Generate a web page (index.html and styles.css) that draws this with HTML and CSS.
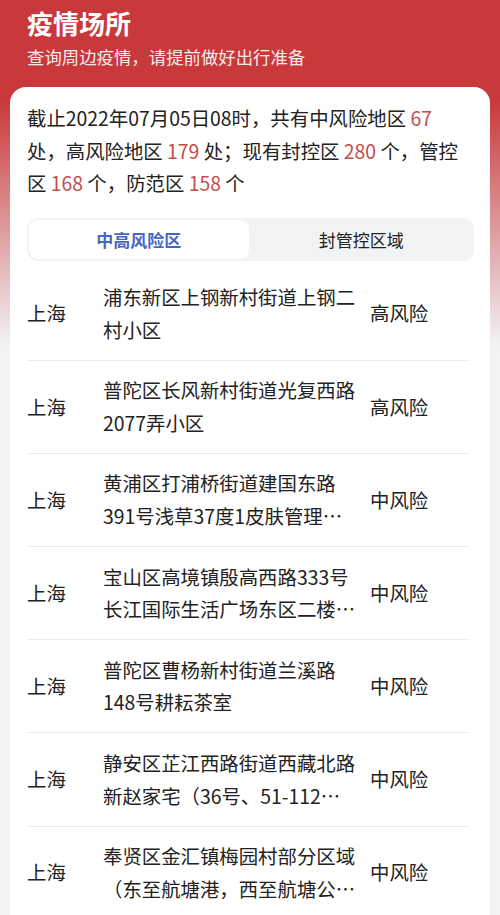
FILE: index.html
```html
<!DOCTYPE html>
<html lang="zh-CN">
<head>
<meta charset="utf-8">
<title>疫情场所</title>
<link rel="stylesheet" href="styles.css">
</head>
<body>
<div class="page">
  <header class="header">
    <h1 class="title">疫情场所</h1>
    <p class="subtitle">查询周边疫情，请提前做好出行准备</p>
  </header>
  <section class="card">
    <p class="summary">截止2022年07月05日08时，共有中风险地区 <span class="num">67</span> 处，高风险地区 <span class="num">179</span> 处；现有封控区 <span class="num">280</span> 个，管控区 <span class="num">168</span> 个，防范区 <span class="num">158</span> 个</p>
    <div class="tabs">
      <div class="tab active">中高风险区</div>
      <div class="tab">封管控区域</div>
    </div>
    <ul class="list">
      <li class="row"><span class="city">上海</span><span class="addr">浦东新区上钢新村街道上钢二村小区</span><span class="risk">高风险</span></li>
      <li class="row"><span class="city">上海</span><span class="addr">普陀区长风新村街道光复西路2077弄小区</span><span class="risk">高风险</span></li>
      <li class="row"><span class="city">上海</span><span class="addr">黄浦区打浦桥街道建国东路391号浅草37度1皮肤管理…</span><span class="risk">中风险</span></li>
      <li class="row"><span class="city">上海</span><span class="addr">宝山区高境镇殷高西路333号长江国际生活广场东区二楼…</span><span class="risk">中风险</span></li>
      <li class="row"><span class="city">上海</span><span class="addr">普陀区曹杨新村街道兰溪路148号耕耘茶室</span><span class="risk">中风险</span></li>
      <li class="row"><span class="city">上海</span><span class="addr">静安区芷江西路街道西藏北路新赵家宅（36号、51-112…</span><span class="risk">中风险</span></li>
      <li class="row"><span class="city">上海</span><span class="addr">奉贤区金汇镇梅园村部分区域（东至航塘港，西至航塘公…</span><span class="risk">中风险</span></li>
    </ul>
  </section>
</div>
</body>
</html>
```

FILE: styles.css
```css
* { box-sizing: border-box; }
html, body {
  margin: 0;
  padding: 0;
}
body {
  width: 500px;
  height: 915px;
  overflow: hidden;
  font-family: "Noto Sans CJK SC", "Noto Sans", sans-serif;
  color: #222;
  background: linear-gradient(180deg, #c9393b 0px, #c9393b 100px, #f2f3f5 345px, #f2f3f5 100%);
}
.page {
  padding: 0 10px;
}
.header {
  padding: 6px 17px 0;
  color: #fff;
}
.title {
  margin: 0;
  font-size: 26px;
  line-height: 34px;
  font-weight: 700;
}
.subtitle {
  margin: 0;
  font-size: 17.4px;
  line-height: 34px;
  color: rgba(255,255,255,0.92);
}
.card {
  margin-top: 13px;
  background: #fff;
  border-radius: 16px;
  padding: 15px 17px 0;
  min-height: 900px;
}
.summary {
  margin: 0;
  font-size: 19.4px;
  line-height: 32.5px;
  color: #222;
}
.num {
  color: #c24d4c;
}
.tabs {
  margin-top: 18px;
  display: grid;
  grid-template-columns: 1fr 1fr;
  background: #f2f3f5;
  border-radius: 11px;
  padding: 2px;
  height: 43px;
  margin-right: -1px;
}
.tab {
  display: flex;
  align-items: center;
  justify-content: center;
  font-size: 17px;
  color: #222;
  border-radius: 9px;
}
.tab.active {
  background: #fff;
  color: #4766c4;
  font-weight: 700;
  margin-right: 2px;
}
.list {
  list-style: none;
  margin: 7px 0 0;
  padding: 0;
}
.row {
  display: flex;
  align-items: center;
  height: 93.2px;
  border-bottom: 1px solid #ececec;
  margin-right: 3px;
  font-size: 19.4px;
  line-height: 32.5px;
}
.city {
  width: 76px;
  flex: none;
}
.addr {
  width: 263px;
  flex: none;
  padding-right: 4px;
}
.risk {
  flex: none;
  padding-left: 4px;
}
```
